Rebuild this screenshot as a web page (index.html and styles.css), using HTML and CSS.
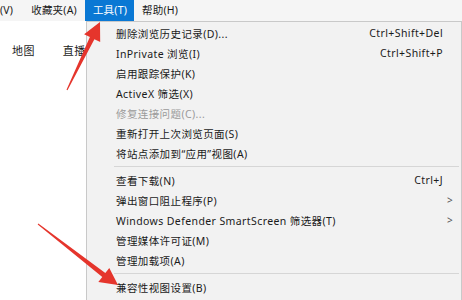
FILE: index.html
```
<!DOCTYPE html>
<html lang="zh-CN">
<head>
    <meta charset="UTF-8">
    <title>工具菜单</title>
    <link rel="stylesheet" href="styles.css">
</head>
<body>
    <div class="menubar">
        <span class="menubar-item cut">(V)</span>
        <span class="menubar-item">收藏夹(A)</span>
        <span class="menubar-item activo">工具(T)</span>
        <span class="menubar-item">帮助(H)</span>
    </div>

    <div class="pagina">
        <a class="enlace">地图</a>
        <a class="enlace">直播</a>
    </div>

    <div class="menu">
        <div class="item"><span class="label">删除浏览历史记录(D)...</span><span class="atajo">Ctrl+Shift+Del</span><span class="sub"></span></div>
        <div class="item"><span class="label">InPrivate 浏览(I)</span><span class="atajo">Ctrl+Shift+P</span><span class="sub"></span></div>
        <div class="item"><span class="label">启用跟踪保护(K)</span><span class="atajo"></span><span class="sub"></span></div>
        <div class="item"><span class="label">ActiveX 筛选(X)</span><span class="atajo"></span><span class="sub"></span></div>
        <div class="item off"><span class="label">修复连接问题(C)...</span><span class="atajo"></span><span class="sub"></span></div>
        <div class="item"><span class="label">重新打开上次浏览页面(S)</span><span class="atajo"></span><span class="sub"></span></div>
        <div class="item"><span class="label">将站点添加到“应用”视图(A)</span><span class="atajo"></span><span class="sub"></span></div>
        <div class="sep"></div>
        <div class="item"><span class="label">查看下载(N)</span><span class="atajo">Ctrl+J</span><span class="sub"></span></div>
        <div class="item"><span class="label">弹出窗口阻止程序(P)</span><span class="atajo"></span><span class="sub">&gt;</span></div>
        <div class="item"><span class="label">Windows Defender SmartScreen 筛选器(T)</span><span class="atajo"></span><span class="sub">&gt;</span></div>
        <div class="item"><span class="label">管理媒体许可证(M)</span><span class="atajo"></span><span class="sub"></span></div>
        <div class="item"><span class="label">管理加载项(A)</span><span class="atajo"></span><span class="sub"></span></div>
        <div class="sep"></div>
        <div class="item"><span class="label">兼容性视图设置(B)</span><span class="atajo"></span><span class="sub"></span></div>
    </div>

    <svg class="flechas" width="462" height="300" viewBox="0 0 462 300">
        <polygon points="66.5,89.8 89.9,37.1 84.1,34.3 100,22 100.2,42.1 94.4,39.3 67.5,90.2" />
        <polygon points="38.3,223.6 105.3,273.0 109.3,267.9 118,285 98.3,282.1 102.3,277.0 37.7,224.4" />
    </svg>
</body>
</html>
```

FILE: styles.css
```
body {
    margin: 0;
    width: 462px;
    height: 300px;
    overflow: hidden;
    background-color: #fff;
    font-family: "Noto Sans", "Noto Sans CJK SC", sans-serif;
    font-size: 10.5px;
    letter-spacing: 0.4px;
    color: #1a1a1a;
    position: relative;
}

.menubar {
    display: flex;
    height: 21px;
    background-color: #f5f5f5;
    letter-spacing: 0.2px;
}

.menubar-item {
    line-height: 21px;
    padding: 0 8px;
}

.menubar-item.cut {
    padding-left: 0;
    margin-right: 2px;
}

.menubar-item.activo {
    background-color: #0a78d4;
    color: #fff;
    padding: 0 7px 0 8px;
}

.pagina {
    display: flex;
    gap: 28px;
    padding: 21px 0 0 12px;
    font-size: 11px;
}

.menu {
    position: absolute;
    top: 21px;
    left: 86px;
    width: 374px;
    height: 290px;
    background-color: #f2f2f2;
    border: 1px solid #c9c9c9;
    padding-top: 1px;
}

.item {
    display: flex;
    align-items: center;
    height: 20px;
    padding-left: 29px;
}

.item .label {
    flex: 1;
}

.item .atajo {
    text-align: right;
}

.item .sub {
    width: 14px;
    padding-left: 4px;
    font-size: 10px;
    color: #555;
}

.item.off {
    color: #9a9a9a;
}

.sep {
    height: 1px;
    margin: 3px 2px 3px 27px;
    background-color: #d6d6d6;
}

.flechas {
    position: absolute;
    top: 0;
    left: 0;
}

.flechas polygon {
    fill: #e5352c;
}
```
